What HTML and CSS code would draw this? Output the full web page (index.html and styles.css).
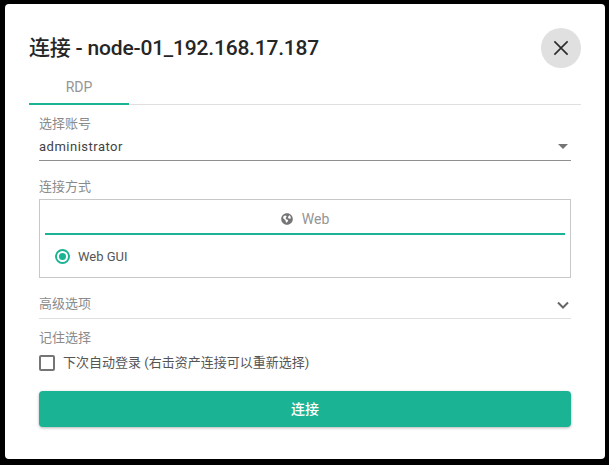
FILE: index.html
```html
<!DOCTYPE html>
<html lang="zh-CN">
<head>
<meta charset="utf-8">
<title>连接</title>
<link rel="stylesheet" href="styles.css">
</head>
<body>
<div class="dialog">
  <header class="head">
    <h1 class="title">连接 - node-01_192.168.17.187</h1>
    <button class="close" type="button" aria-label="关闭">
      <svg width="24" height="24" viewBox="0 0 24 24"><path d="M5.4 5.4 18.6 18.6M18.6 5.4 5.4 18.6" fill="none" stroke="#2a2a2a" stroke-width="1.6"/></svg>
    </button>
  </header>
  <div class="tabs"><div class="tab">RDP</div></div>
  <div class="form">
    <div class="label l-account">选择账号</div>
    <div class="select">
      <span>administrator</span>
      <svg class="caret" width="10" height="5" viewBox="0 0 10 5"><path d="M0 0h10L5 5z" fill="#757575"/></svg>
    </div>
    <div class="label l-method">连接方式</div>
    <div class="box">
      <div class="subtab">
        <svg class="globe" width="12" height="12" viewBox="0 0 512 512"><path fill="#757575" d="M256 8C119 8 8 119 8 256s111 248 248 248 248-111 248-248S393 8 256 8zm160 215-30 22-60-14-30-50 40-60 40-30c20 15 45 70 40 132zM100 150l70-40 50 10 20 40-30 30-10 50 40 40 50 10 10 50-50 70-40-10-20-90-60-50-40-40z"/></svg>
        <span>Web</span>
      </div>
      <label class="radio-row"><span class="radio"></span><span>Web GUI</span></label>
    </div>
    <div class="advanced">
      <span class="adv-text">高级选项</span>
      <svg width="14" height="9" viewBox="0 0 14 9"><path d="M2 1.5 7 6.5 12 1.5" fill="none" stroke="#666" stroke-width="2"/></svg>
    </div>
    <div class="label l-remember">记住选择</div>
    <label class="check-row"><span class="check"></span><span class="check-text">下次自动登录 (右击资产连接可以重新选择)</span></label>
    <button class="submit" type="button">连接</button>
  </div>
</div>
</body>
</html>
```
FILE: styles.css
```css
* { box-sizing: border-box; }
html, body { margin: 0; height: 100%; }
body {
  background: #000;
  padding: 4px 4px 6px 5px;
  font-family: Roboto, "Noto Sans CJK SC", sans-serif;
  overflow: hidden;
}
.dialog {
  background: #fff;
  height: 455px;
  border-radius: 4px;
  padding: 24px 24px 0;
}
.head {
  display: flex;
  justify-content: space-between;
  align-items: center;
  height: 40px;
}
.title {
  margin: 0 0 4px;
  font-size: 21px;
  font-weight: 500;
  letter-spacing: -.2px;
  color: #262626;
}
.close {
  width: 40px;
  height: 40px;
  border: 0;
  border-radius: 50%;
  background: #e0e0e0;
  padding: 0;
  display: flex;
  align-items: center;
  justify-content: center;
}
.tabs {
  margin-top: 5px;
  height: 32px;
  border-bottom: 1px solid #e0e0e0;
}
.tab {
  width: 100px;
  height: 32px;
  border-bottom: 2px solid #1ab394;
  color: #959595;
  font-size: 14px;
  line-height: 29px;
  text-align: center;
}
.form { padding: 0 10px; }
.label {
  font-size: 13px;
  line-height: 18px;
  color: #8a8a8a;
}
.l-account { margin-top: 10px; }
.select {
  height: 28px;
  display: flex;
  justify-content: space-between;
  align-items: center;
  padding: 0 3px 1px 0;
  font-size: 13px;
  color: #424242;
  border-bottom: 1px solid #8f8f8f;
  letter-spacing: .5px;
}
.caret { display: block; }
.l-method { margin-top: 17px; }
.box {
  margin-top: 3px;
  height: 79px;
  border: 1px solid #c8c8c8;
  padding: 0 5px;
}
.subtab {
  height: 35px;
  border-bottom: 2px solid #1ab394;
  display: flex;
  align-items: center;
  justify-content: center;
  gap: 9px;
  font-size: 14px;
  color: #959595;
  padding-top: 5px;
}
.globe { display: block; }
.radio-row {
  display: flex;
  align-items: center;
  gap: 8px;
  height: 44px;
  padding: 0 0 1px 10px;
  font-size: 13px;
  color: #555;
}
.radio {
  width: 15px;
  height: 15px;
  border: 2px solid #1ab394;
  border-radius: 50%;
  padding: 2px;
  background: #1ab394 content-box;
}
.advanced {
  margin-top: 14px;
  height: 27px;
  display: flex;
  justify-content: space-between;
  align-items: center;
  padding-right: 1px;
  font-size: 13px;
  color: #8a8a8a;
  border-bottom: 1px solid #e0e0e0;
}
.adv-text { margin-bottom: 6px; }
.l-remember { margin-top: 10px; }
.check-row {
  margin-top: 6px;
  display: flex;
  align-items: center;
  gap: 8px;
  height: 20px;
  font-size: 13px;
  color: #555;
}
.check-text { margin-bottom: 4px; }
.check {
  width: 16px;
  height: 16px;
  border: 2px solid #757575;
  border-radius: 2px;
}
.submit {
  display: block;
  width: 100%;
  height: 36px;
  margin-top: 18px;
  padding: 0 0 3px;
  border: 0;
  border-radius: 4px;
  background: #1ab394;
  color: #fff;
  font: 500 14px Roboto, "Noto Sans CJK SC", sans-serif;
  box-shadow: 0 1px 3px rgba(0, 0, 0, .3);
}
```
